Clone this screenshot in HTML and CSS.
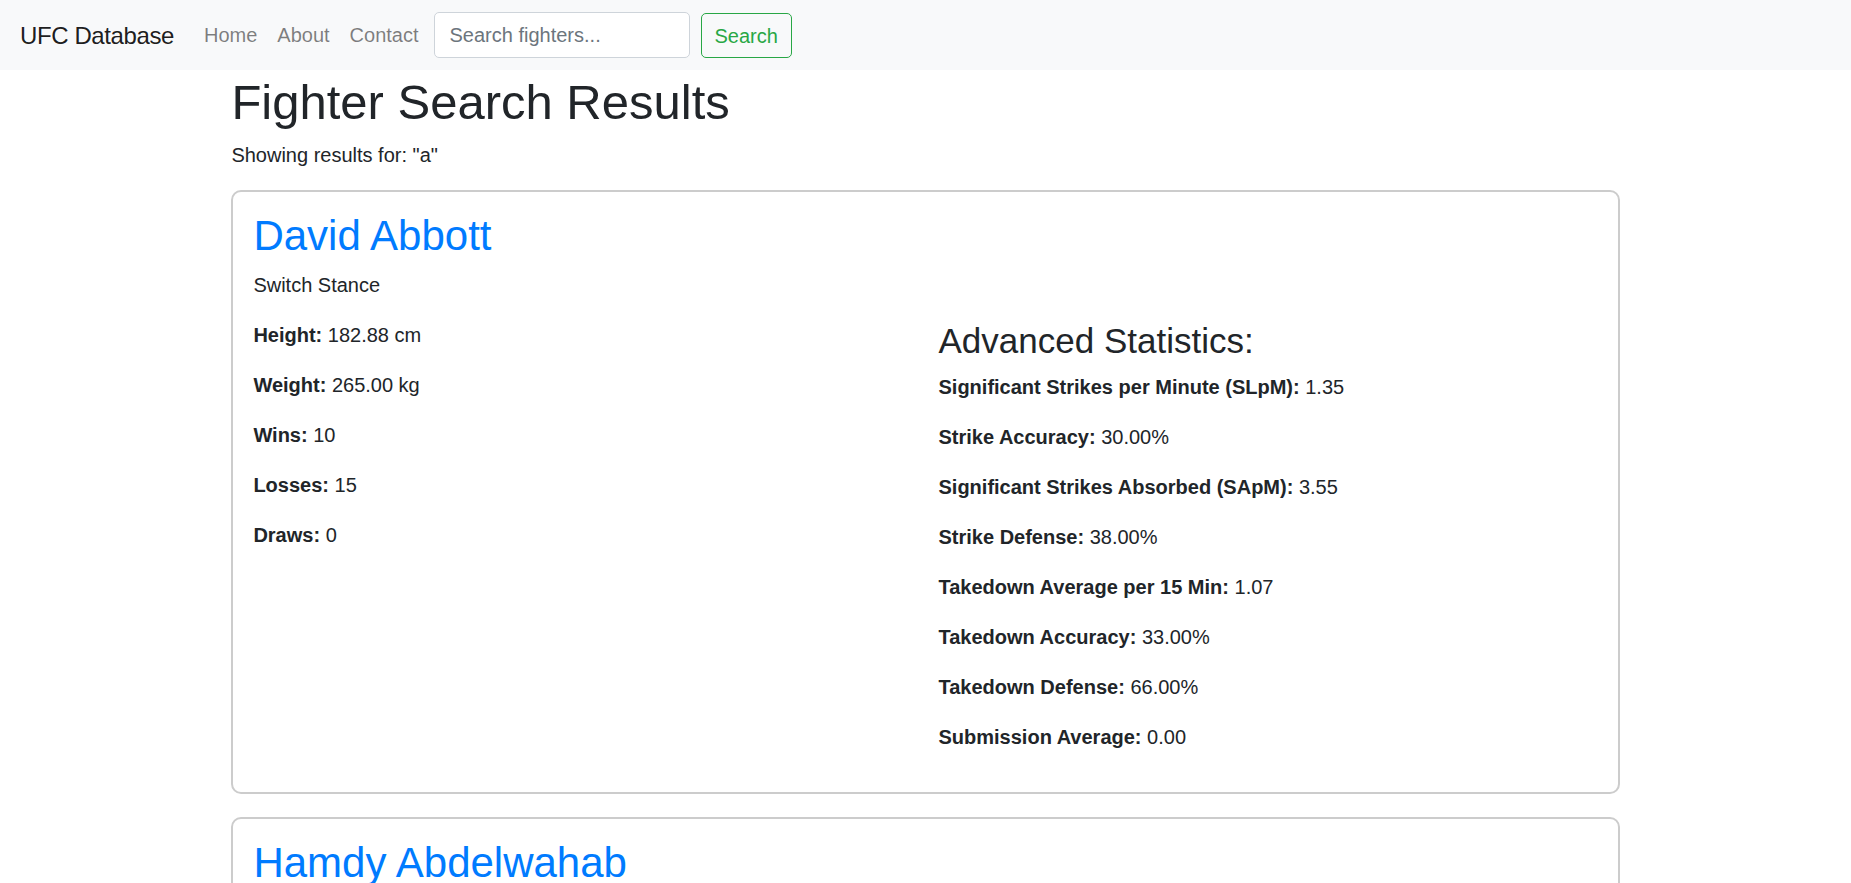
FILE: index.html
```html
<!DOCTYPE html>
<html lang="en">
<head>
<meta charset="utf-8">
<title>UFC Database - Search</title>
<link rel="stylesheet" href="styles.css">
</head>
<body>
<nav class="navbar">
  <a class="brand" href="#">UFC Database</a>
  <ul class="nav">
    <li><a class="nav-link" href="#">Home</a></li>
    <li><a class="nav-link" href="#">About</a></li>
    <li><a class="nav-link" href="#">Contact</a></li>
  </ul>
  <form class="search-form">
    <input class="search-input" type="search" placeholder="Search fighters...">
    <button class="search-btn" type="button">Search</button>
  </form>
</nav>

<main class="container">
  <h1 class="page-title">Fighter Search Results</h1>
  <p class="para">Showing results for: "a"</p>

  <div class="card">
    <h2 class="fighter-name">David Abbott</h2>
    <p class="para">Switch Stance</p>
    <div class="row">
      <div class="col">
        <p class="para"><strong>Height:</strong> 182.88 cm</p>
        <p class="para"><strong>Weight:</strong> 265.00 kg</p>
        <p class="para"><strong>Wins:</strong> 10</p>
        <p class="para"><strong>Losses:</strong> 15</p>
        <p class="para"><strong>Draws:</strong> 0</p>
      </div>
      <div class="col">
        <h3 class="sub-title">Advanced Statistics:</h3>
        <p class="para"><strong>Significant Strikes per Minute (SLpM):</strong> 1.35</p>
        <p class="para"><strong>Strike Accuracy:</strong> 30.00%</p>
        <p class="para"><strong>Significant Strikes Absorbed (SApM):</strong> 3.55</p>
        <p class="para"><strong>Strike Defense:</strong> 38.00%</p>
        <p class="para"><strong>Takedown Average per 15 Min:</strong> 1.07</p>
        <p class="para"><strong>Takedown Accuracy:</strong> 33.00%</p>
        <p class="para"><strong>Takedown Defense:</strong> 66.00%</p>
        <p class="para"><strong>Submission Average:</strong> 0.00</p>
      </div>
    </div>
  </div>

  <div class="card">
    <h2 class="fighter-name">Hamdy Abdelwahab</h2>
    <p class="para">Orthodox</p>
    <div class="row">
      <div class="col">
        <p class="para"><strong>Height:</strong> 187.96 cm</p>
        <p class="para"><strong>Weight:</strong> 264.00 kg</p>
        <p class="para"><strong>Wins:</strong> 5</p>
        <p class="para"><strong>Losses:</strong> 2</p>
        <p class="para"><strong>Draws:</strong> 0</p>
      </div>
      <div class="col">
        <h3 class="sub-title">Advanced Statistics:</h3>
        <p class="para"><strong>Significant Strikes per Minute (SLpM):</strong> 3.87</p>
        <p class="para"><strong>Strike Accuracy:</strong> 52.00%</p>
      </div>
    </div>
  </div>
</main>
</body>
</html>
```

FILE: styles.css
```css
* {
  box-sizing: border-box;
}

html, body {
  margin: 0;
  padding: 0;
}

body {
  font-family: "Segoe UI", "Liberation Sans", Arial, sans-serif;
  font-size: 20px;
  line-height: 1.5;
  color: #212529;
  background: #ffffff;
}

a {
  text-decoration: none;
}

.navbar {
  display: flex;
  align-items: center;
  height: 70px;
  padding: 12px 20px;
  background: #f8f9fa;
}

.brand {
  font-size: 24px;
  letter-spacing: -0.4px;
  line-height: 37px;
  color: rgba(0, 0, 0, 0.9);
  margin-right: 20px;
}

.nav {
  display: flex;
  list-style: none;
  margin: 0;
  padding: 0;
}

.nav-link {
  display: block;
  padding: 10px 10px;
  color: rgba(0, 0, 0, 0.5);
}

.search-form {
  display: flex;
  align-items: center;
  margin-left: 5px;
}

.search-input {
  width: 256px;
  height: 46px;
  padding: 7px 15px;
  font: inherit;
  color: #495057;
  background: #fff;
  border: 1px solid #ced4da;
  border-radius: 5px;
  margin-right: 11px;
}

.search-input::placeholder {
  color: #6c757d;
}

.search-btn {
  height: 45px;
  padding: 7px 13px;
  font: inherit;
  color: #28a745;
  background: transparent;
  border: 1px solid #28a745;
  border-radius: 5px;
}

.container {
  width: 75%;
  margin: 0 auto;
}

.page-title {
  font-size: 49px;
  font-weight: 500;
  line-height: 1.2;
  margin: 0 0 7px;
  padding-top: 3px;
  height: 63px;
}

.para {
  margin: 0 0 20px;
}

.card {
  border: 2px solid #cccccc;
  border-radius: 10px;
  padding: 20px;
  margin-bottom: 23px;
}

.fighter-name {
  font-size: 42px;
  font-weight: 500;
  line-height: 48px;
  color: #007bff;
  margin: 0 0 10px;
}

.row {
  display: flex;
  gap: 26px;
}

.col {
  flex: 1 1 0;
  min-width: 0;
}

.sub-title {
  font-size: 35px;
  font-weight: 500;
  line-height: 1.2;
  margin: 0 0 10px;
}

strong {
  font-weight: 700;
}
```
